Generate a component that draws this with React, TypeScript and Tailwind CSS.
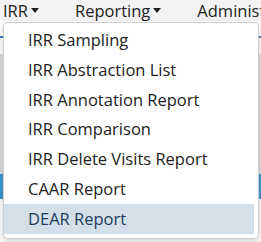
import React from "react";

const items = [
  "IRR Sampling",
  "IRR Abstraction List",
  "IRR Annotation Report",
  "IRR Comparison",
  "IRR Delete Visits Report",
  "CAAR Report",
  "DEAR Report",
];

const Caret = () => (
  <span className="ml-[3px] inline-block h-0 w-0 border-x-[4.5px] border-t-[5px] border-x-transparent border-t-[#222] align-middle" />
);

const App: React.FC = () => {
  return (
    <div className="relative h-[242px] w-[261px] overflow-hidden bg-white font-['Open_Sans',sans-serif] text-[16.5px] text-[#222]">
      {/* page behind the menu */}
      <div className="flex h-[21px] items-center gap-[36px] bg-[#f3f3f3] pl-[3px] leading-[21px]">
        <span className="flex items-center">IRR<Caret /></span>
        <span className="flex items-center">Reporting<Caret /></span>
        <span className="whitespace-nowrap">Administ</span>
      </div>
      <div className="h-[17px] border-b-2 border-[#3d7fb8]" />
      <div className="h-[16px]" />
      <div className="h-[120px] bg-[#dcdcdc]" />
      <div className="h-[25px] bg-[#3c9ad3]" />

      {/* dropdown */}
      <ul className="absolute left-[3px] top-[22px] w-[256px] rounded-[4px] border border-[#cfcfcf] bg-white pb-[4px] pt-[2px] shadow-[0_4px_10px_rgba(0,0,0,0.18)]">
        {items.map((item) => (
          <li
            key={item}
            className={
              item === "DEAR Report"
                ? "mr-[4px] bg-[#d3e0ea] px-[24px] py-[3px] leading-[23.8px] text-[#1d3c5a]"
                : "px-[24px] py-[3px] leading-[23.8px]"
            }
          >
            {item}
          </li>
        ))}
      </ul>
    </div>
  );
};

export default App;
